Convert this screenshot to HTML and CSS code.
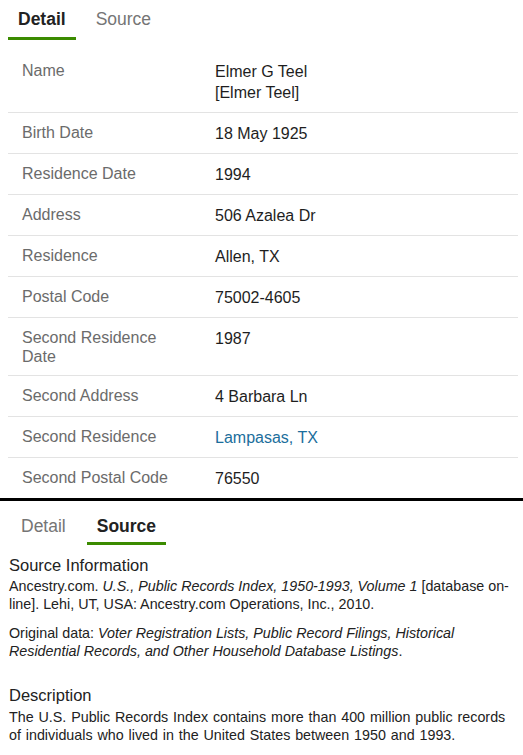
FILE: index.html
```html
<!DOCTYPE html>
<html lang="en">
<head>
    <meta charset="UTF-8">
    <meta name="viewport" content="width=device-width, initial-scale=1.0">
    <title>Record Detail</title>
    <link rel="stylesheet" href="styles.css">
</head>
<body>
    <section class="record">
        <nav class="tabs">
            <span class="tab active">Detail</span>
            <span class="tab">Source</span>
        </nav>
        <table class="facts">
            <colgroup>
                <col class="label-col">
                <col>
            </colgroup>
            <tbody>
                <tr><th>Name</th><td>Elmer G Teel<br>[Elmer Teel]</td></tr>
                <tr><th>Birth Date</th><td>18 May 1925</td></tr>
                <tr><th>Residence Date</th><td>1994</td></tr>
                <tr><th>Address</th><td>506 Azalea Dr</td></tr>
                <tr><th>Residence</th><td>Allen, TX</td></tr>
                <tr><th>Postal Code</th><td>75002-4605</td></tr>
                <tr><th>Second Residence Date</th><td>1987</td></tr>
                <tr><th>Second Address</th><td>4 Barbara Ln</td></tr>
                <tr><th>Second Residence</th><td><a href="#">Lampasas, TX</a></td></tr>
                <tr><th>Second Postal Code</th><td>76550</td></tr>
            </tbody>
        </table>
    </section>

    <section class="source">
        <nav class="tabs">
            <span class="tab">Detail</span>
            <span class="tab active">Source</span>
        </nav>
        <div class="source-body">
            <h3>Source Information</h3>
            <p>Ancestry.com. <em>U.S., Public Records Index, 1950-1993, Volume 1</em> [database on-line]. Lehi, UT, USA: Ancestry.com Operations, Inc., 2010.</p>
            <p>Original data: <em>Voter Registration Lists, Public Record Filings, Historical Residential Records, and Other Household Database Listings</em>.</p>
            <h3 class="desc">Description</h3>
            <p class="desc-text">The U.S. Public Records Index contains more than 400 million public records of individuals who lived in the United States between 1950 and 1993.</p>
        </div>
    </section>
</body>
</html>
```

FILE: styles.css
```css
body {
    margin: 0;
    font-family: "Liberation Sans", Arial, sans-serif;
    color: #222;
    background: #fff;
}
.tabs {
    display: flex;
    gap: 10px;
    padding-left: 8px;
}
.tab {
    font-size: 17.5px;
    line-height: 22px;
    padding: 8px 10px 7px;
    color: #757575;
    border-bottom: 3px solid transparent;
}
.tab.active {
    font-weight: bold;
    color: #222;
    border-bottom-color: #3b8b00;
}
.facts {
    width: calc(100% - 13px);
    margin: 11px 0 0 8px;
    border-collapse: collapse;
    table-layout: fixed;
    font-size: 16px;
}
.label-col {
    width: 193px;
}
.facts th,
.facts td {
    padding: 10px 14px 9px;
    text-align: left;
    vertical-align: top;
    border-top: 1px solid #e3e3e3;
}
.facts tr:first-child th,
.facts tr:first-child td {
    border-top: none;
}
.facts th {
    font-weight: normal;
    line-height: 19px;
    color: #6b6b6b;
}
.facts td {
    line-height: 21px;
    color: #1e1e1e;
}
.facts a {
    color: #1b6e9c;
    text-decoration: none;
}
.source {
    border-top: 3px solid #000;
}
.source .tabs {
    padding-left: 11px;
    gap: 11px;
    margin-top: 6px;
}
.source .tab {
    padding-bottom: 5px;
}
.source-body {
    padding: 10px 9px 0;
    font-size: 14.3px;
    line-height: 18px;
    color: #222;
}
.source-body h3 {
    margin: 0 0 2px;
    font-size: 16.5px;
    line-height: 20px;
    font-weight: normal;
}
.source-body p {
    margin: 0 0 11px;
}
.source-body h3.desc {
    margin-top: 25px;
    margin-bottom: 3px;
}
.desc-text {
    word-spacing: 0.9px;
}
```
